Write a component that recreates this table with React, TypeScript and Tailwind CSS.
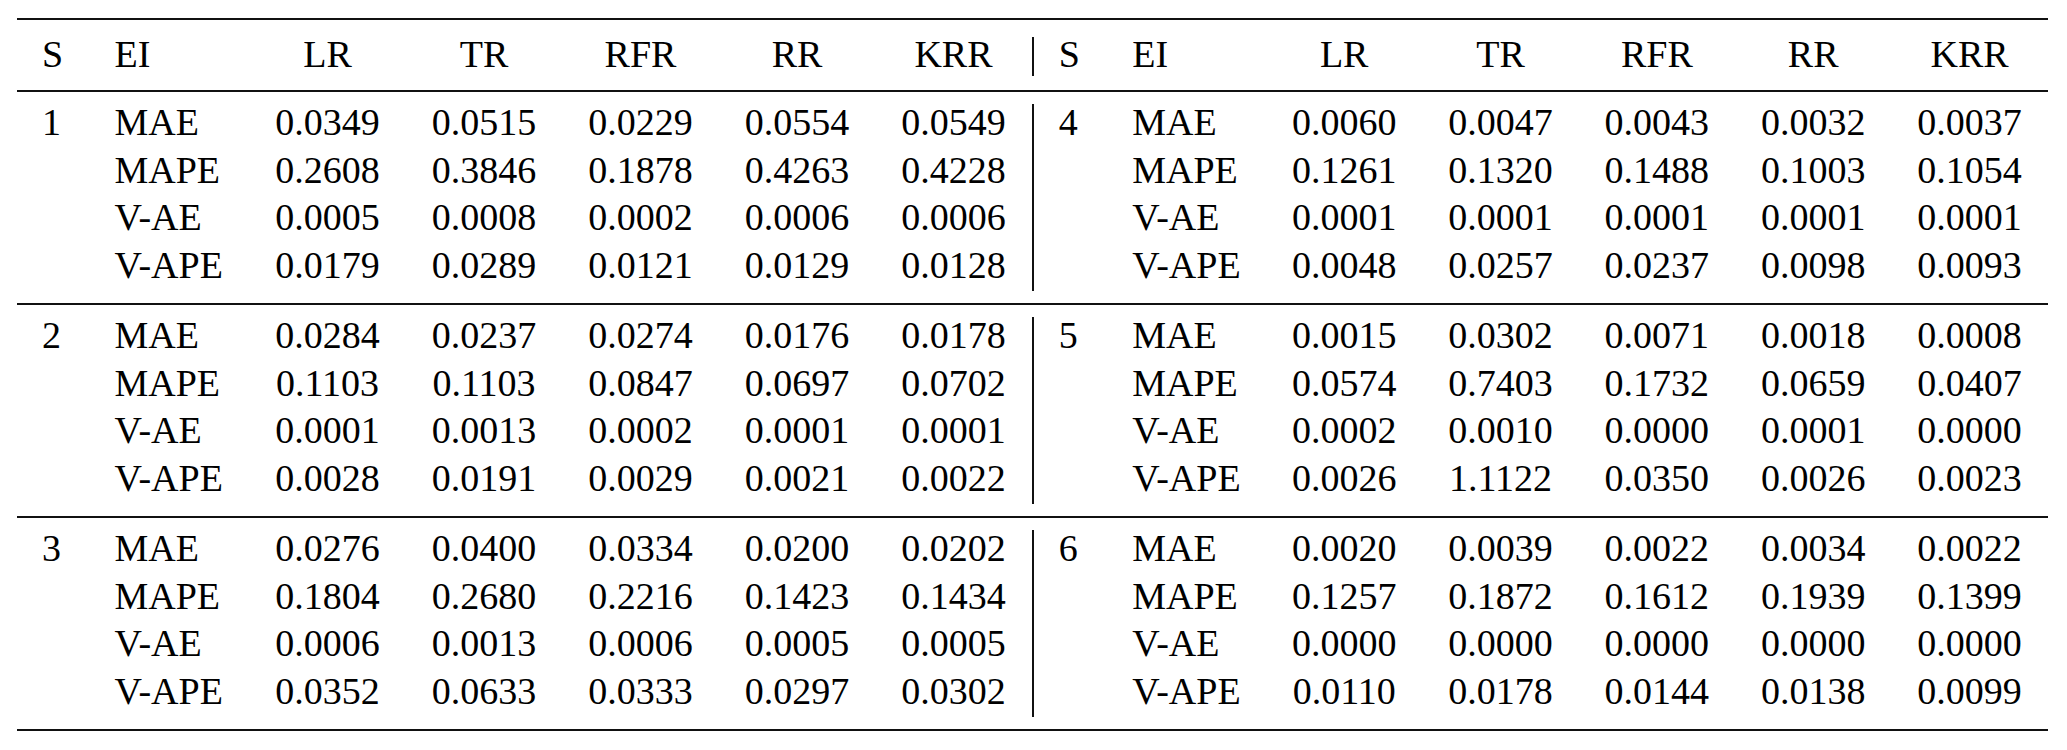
const methods = ["LR", "TR", "RFR", "RR", "KRR"];

type Half = { s: string; rows: [string, string[]][] };

const groups: { left: Half; right: Half }[] = [
  {
    left: {
      s: "1",
      rows: [
        ["MAE", ["0.0349", "0.0515", "0.0229", "0.0554", "0.0549"]],
        ["MAPE", ["0.2608", "0.3846", "0.1878", "0.4263", "0.4228"]],
        ["V-AE", ["0.0005", "0.0008", "0.0002", "0.0006", "0.0006"]],
        ["V-APE", ["0.0179", "0.0289", "0.0121", "0.0129", "0.0128"]],
      ],
    },
    right: {
      s: "4",
      rows: [
        ["MAE", ["0.0060", "0.0047", "0.0043", "0.0032", "0.0037"]],
        ["MAPE", ["0.1261", "0.1320", "0.1488", "0.1003", "0.1054"]],
        ["V-AE", ["0.0001", "0.0001", "0.0001", "0.0001", "0.0001"]],
        ["V-APE", ["0.0048", "0.0257", "0.0237", "0.0098", "0.0093"]],
      ],
    },
  },
  {
    left: {
      s: "2",
      rows: [
        ["MAE", ["0.0284", "0.0237", "0.0274", "0.0176", "0.0178"]],
        ["MAPE", ["0.1103", "0.1103", "0.0847", "0.0697", "0.0702"]],
        ["V-AE", ["0.0001", "0.0013", "0.0002", "0.0001", "0.0001"]],
        ["V-APE", ["0.0028", "0.0191", "0.0029", "0.0021", "0.0022"]],
      ],
    },
    right: {
      s: "5",
      rows: [
        ["MAE", ["0.0015", "0.0302", "0.0071", "0.0018", "0.0008"]],
        ["MAPE", ["0.0574", "0.7403", "0.1732", "0.0659", "0.0407"]],
        ["V-AE", ["0.0002", "0.0010", "0.0000", "0.0001", "0.0000"]],
        ["V-APE", ["0.0026", "1.1122", "0.0350", "0.0026", "0.0023"]],
      ],
    },
  },
  {
    left: {
      s: "3",
      rows: [
        ["MAE", ["0.0276", "0.0400", "0.0334", "0.0200", "0.0202"]],
        ["MAPE", ["0.1804", "0.2680", "0.2216", "0.1423", "0.1434"]],
        ["V-AE", ["0.0006", "0.0013", "0.0006", "0.0005", "0.0005"]],
        ["V-APE", ["0.0352", "0.0633", "0.0333", "0.0297", "0.0302"]],
      ],
    },
    right: {
      s: "6",
      rows: [
        ["MAE", ["0.0020", "0.0039", "0.0022", "0.0034", "0.0022"]],
        ["MAPE", ["0.1257", "0.1872", "0.1612", "0.1939", "0.1399"]],
        ["V-AE", ["0.0000", "0.0000", "0.0000", "0.0000", "0.0000"]],
        ["V-APE", ["0.0110", "0.0178", "0.0144", "0.0138", "0.0099"]],
      ],
    },
  },
];

const leftCols = "grid grid-cols-[97.5px_134.75px_repeat(5,156.5px)]";
const rightCols = "grid grid-cols-[98.5px_133.75px_repeat(5,156.35px)]";

function Rule() {
  return <div className="h-[2px] bg-[#111]" />;
}

function Divider({ top, bottom }: { top: string; bottom: string }) {
  return (
    <div className="w-[2px] flex justify-center">
      <div className={`w-[1.5px] bg-[#111] ${top} ${bottom}`} />
    </div>
  );
}

function HalfRows({ half, cols }: { half: Half; cols: string }) {
  return (
    <div className={cols}>
      {half.rows.map(([ei, vals], i) => (
        <div key={ei} className="contents">
          <div className="pl-[25px] h-[47.5px] leading-[47.5px]">{i === 0 ? half.s : ""}</div>
          <div className="h-[47.5px] leading-[47.5px]">{ei}</div>
          {vals.map((v, j) => (
            <div key={j} className="text-center h-[47.5px] leading-[47.5px]">
              {v}
            </div>
          ))}
        </div>
      ))}
    </div>
  );
}

function HeaderHalf({ cols }: { cols: string }) {
  return (
    <div className={cols}>
      <div className="pl-[25px] h-[47.5px] leading-[47.5px]">S</div>
      <div className="h-[47.5px] leading-[47.5px]">EI</div>
      {methods.map((m) => (
        <div key={m} className="text-center h-[47.5px] leading-[47.5px]">
          {m}
        </div>
      ))}
    </div>
  );
}

export default function App() {
  return (
    <div className="w-[2067px] h-[750px] bg-white overflow-hidden">
      <div className="pt-[17.5px] pl-[17px] [font-family:'Liberation_Serif','Times_New_Roman',serif] text-[38px] text-black">
        <div className="w-[2031px]">
          <Rule />
          {/* en-tête */}
          <div className="flex pt-[11px] pb-[12px]">
            <HeaderHalf cols={leftCols} />
            <Divider top="mt-[6.5px]" bottom="mb-[2px]" />
            <HeaderHalf cols={rightCols} />
          </div>
          <Rule />
          {groups.map((g, i) => (
            <div key={i}>
              <div className="flex pt-[7px] pb-[14px]">
                <HalfRows half={g.left} cols={leftCols} />
                <Divider top="mt-[5px]" bottom="-mb-[2px]" />
                <HalfRows half={g.right} cols={rightCols} />
              </div>
              <Rule />
            </div>
          ))}
        </div>
      </div>
    </div>
  );
}
